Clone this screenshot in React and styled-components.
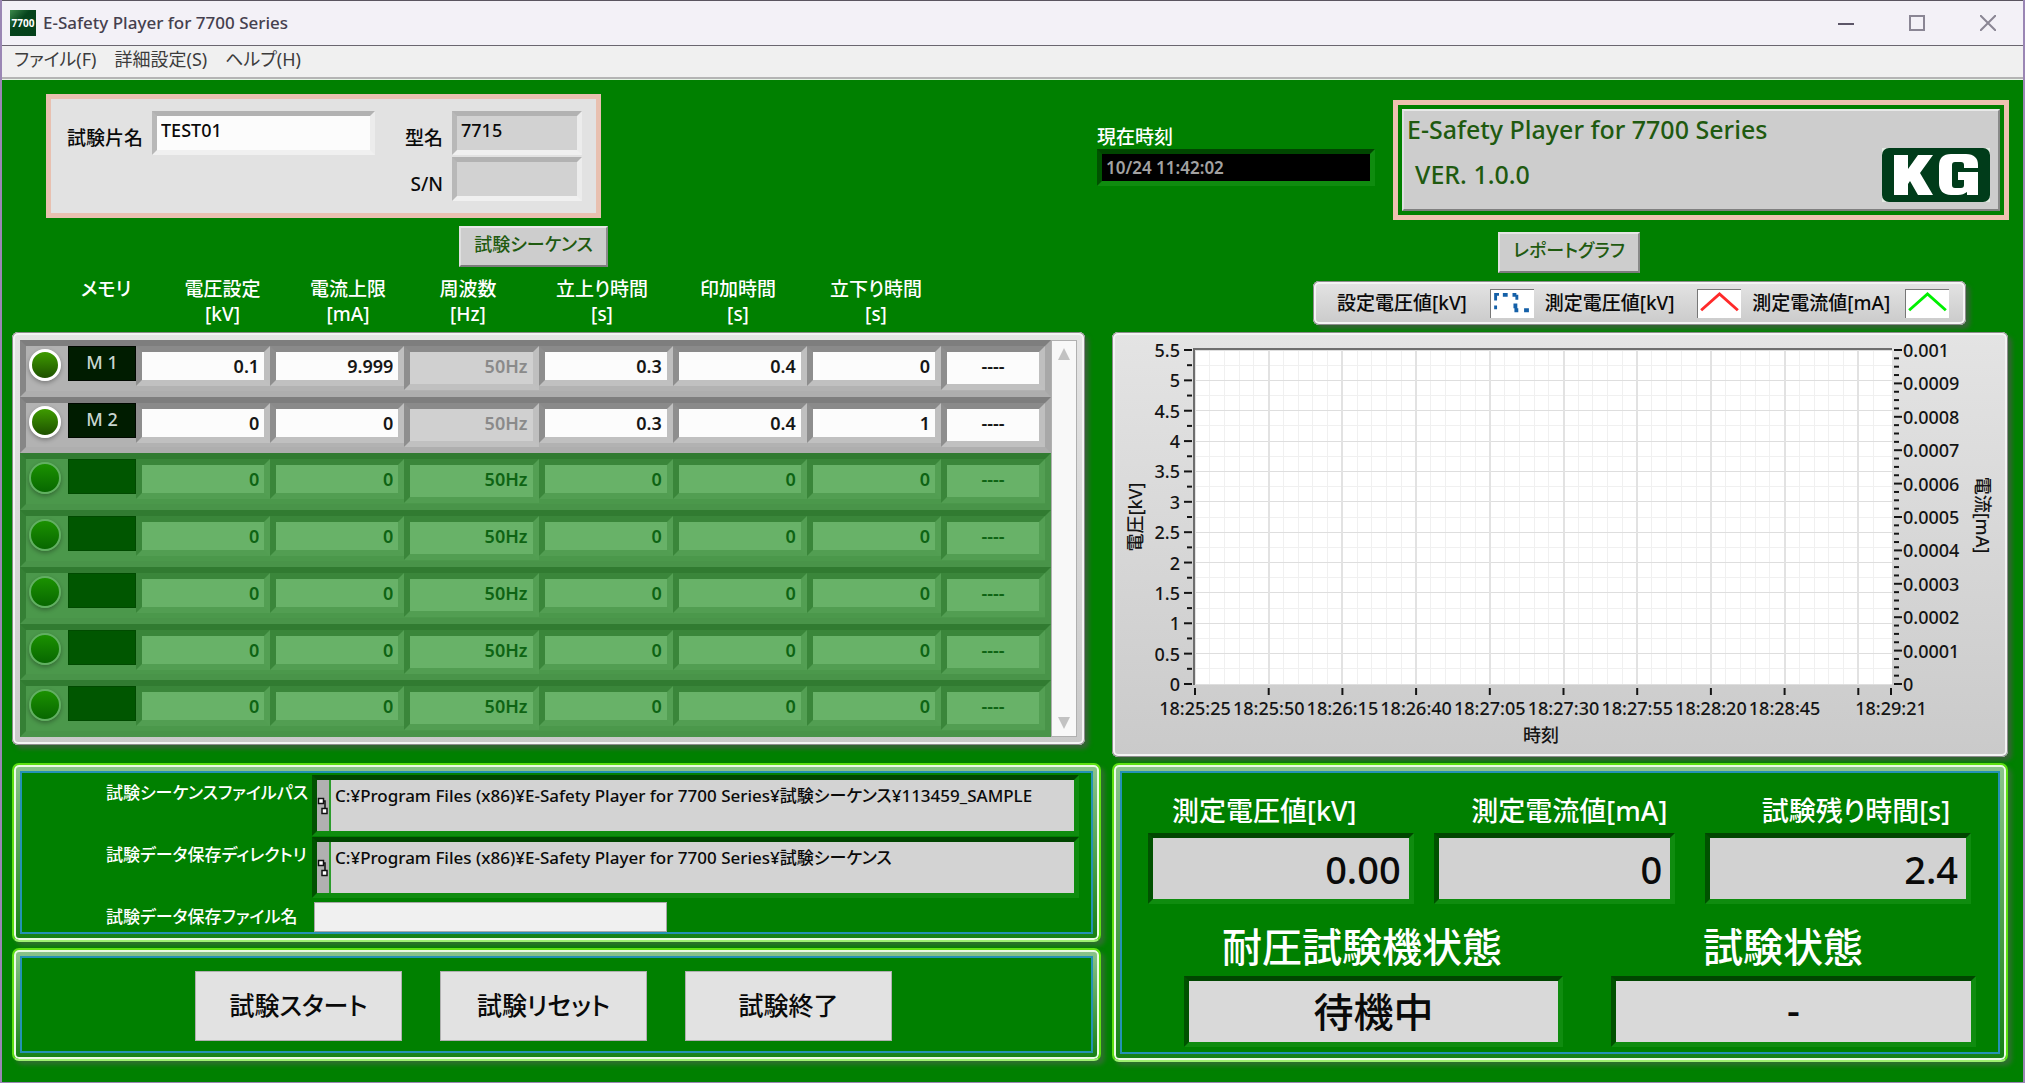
import React from "react";
import styled, { createGlobalStyle, css } from "styled-components";

const GlobalStyle = createGlobalStyle`
  *, *::before, *::after { box-sizing: border-box; }
  body {
    margin: 0;
    background: #008000;
    color: #0a0a0a;
    font-family: "Noto Sans", "Noto Sans CJK JP", sans-serif;
    font-feature-settings: "palt";
    font-size: 18px;
    font-weight: 500;
    line-height: 24px;
  }
  input, button, table { font: inherit; color: inherit; font-feature-settings: inherit; }
`;

/* ---------- window chrome ---------- */

const Window = styled.div`
  min-height: 100vh;
  display: flex;
  flex-direction: column;
  border: solid #9a86b4;
  border-width: 0 2px 1px 2px;
  background: #008000;
`;

const TitleBar = styled.header`
  display: flex;
  align-items: center;
  height: 46px;
  padding-left: 8px;
  background: #f3f1f7;
  border-top: 1px solid #5a5560;
  border-bottom: 1px solid #6a6670;
`;

const WindowTitle = styled.h1`
  flex: 1;
  margin: 0 0 0 7px;
  color: #45404e;
  font-size: 17px;
  font-weight: 500;
  line-height: 24px;
`;

const WindowButton = styled.button`
  display: grid;
  place-items: center;
  width: 71px;
  height: 44px;
  padding: 0;
  border: 0;
  background: transparent;
`;

const MenuBar = styled.nav`
  display: flex;
  gap: 18px;
  height: 34px;
  padding: 0 12px;
  background: #f0f0f0;
  border-bottom: 1px solid #e8f4e8;
  box-shadow: inset 0 -2px 0 #b4b4b4;
`;

const MenuItem = styled.button`
  padding: 0;
  border: 0;
  background: transparent;
  color: #3c3c3c;
  font-size: 18px;
  font-weight: 400;
  line-height: 24px;
  height: 26px;
`;

/* ---------- shared parts ---------- */

const bezels = {
  light: "#b2b2b2 #ececec #f0f0f0 #b8b8b8",
  green: "#004600 #0f8c0f #0f8c0f #005200",
};

const InsetInput = styled.input`
  display: block;
  width: 100%;
  min-width: 0;
  height: ${(p) => p.$height || 44}px;
  padding: 0 4px 6px;
  border: 5px solid;
  border-color: ${(p) => bezels[p.$tone || "light"]};
  border-radius: 0;
  background: ${(p) => p.$fill || "#d2d2d2"};
  outline: none;
`;

const PlateButton = styled.button`
  align-self: flex-start;
  height: 41px;
  padding: 0 0 6px;
  border: 2px solid;
  border-color: #e6e6e6 #8a8a8a #7c7c7c #e0e0e0;
  background: #cdcdcd;
  color: #1f5a10;
  font-size: 18px;
  line-height: 28px;
`;

const greyPlate = css`
  border-radius: 6px;
  background: linear-gradient(#e4e4e4, #cacaca);
  box-shadow:
    inset 0 0 0 1px #8c8c8c,
    inset 0 0 0 3px #f4f4f4,
    4px 4px 4px rgba(70, 90, 70, 0.75);
`;

const GlowFrame = styled.section`
  padding: 6px;
  border: 2px solid #5ee012;
  border-bottom-color: #9cf070;
  border-radius: 7px;
  background: linear-gradient(#8cc48c, #148014);
  box-shadow:
    inset 0 0 0 2px #eafbe4,
    4px 4px 4px rgba(50, 110, 50, 0.9);
`;

const FrameBody = styled.div`
  height: 100%;
  border: 2px solid #2492b4;
  background: #008000;
`;

/* ---------- header row ---------- */

const Header = styled.div`
  display: flex;
  align-items: flex-start;
  gap: 18px;
  padding: 14px 14px 0 44px;
`;

const SpecimenPanel = styled.section`
  display: grid;
  grid-template-columns: 101px 223px 77px 130px;
  gap: 2px 0;
  padding: 12px 14px 12px 0;
  border: 5px solid #e8c0b0;
  background: #e2e2e2;
`;

const SpecimenLabel = styled.label`
  grid-column: ${(p) => p.$column};
  padding: 15px 9px 0 0;
  text-align: right;
  white-space: nowrap;
  font-size: 19px;
  line-height: 24px;
`;

const Clock = styled.div`
  display: flex;
  flex-direction: column;
  width: 278px;
  margin: 31px 0 0 auto;
  color: #fff;
  font-size: 19px;
`;

const ClockInput = styled(InsetInput)`
  padding: 0 4px;
  color: #a2a2a2;
  font-size: 17px;
  font-weight: 600;
`;

const ProductFrame = styled.section`
  width: 616px;
  margin-top: 6px;
  padding: 4px;
  border: 5px solid #ecc2b0;
`;

const ProductPlate = styled.div`
  display: flex;
  justify-content: space-between;
  align-items: flex-end;
  height: 102px;
  padding: 0 8px 7px 3px;
  border: 2px solid;
  border-color: #e8e8e8 #8a8a8a #808080 #e0e0e0;
  background: #cdcdcd;
  color: #1f5a10;
  font-size: 25px;
`;

const ProductText = styled.div`
  display: grid;
  align-self: flex-start;
  gap: 9px;
  line-height: 36px;
`;

const ProductLine = styled.p`
  margin: 0;
  padding-left: ${(p) => (p.$indent ? 8 : 0)}px;
`;

/* ---------- main columns ---------- */

const Main = styled.main`
  flex: 1;
  display: grid;
  grid-template-columns: minmax(0, 1089fr) minmax(0, 896fr);
  gap: 11px;
  padding: 6px 15px 20px 10px;
`;

const LeftColumn = styled.div`
  display: flex;
  flex-direction: column;
  gap: 6px;
`;

const RightColumn = styled.div`
  display: flex;
  flex-direction: column;
  padding-top: 6px;
`;

const SequenceButton = styled(PlateButton)`
  width: 149px;
  margin-left: 447px;
`;

/* ---------- sequence table ---------- */

const SequenceTable = styled.table`
  display: block;
  margin: 4px 16px 12px 0;
`;

const HeadGroup = styled.thead`
  display: block;
  padding-bottom: 5px;
`;

const HeadRow = styled.tr`
  display: grid;
  grid-template-columns: 116fr 117fr 134fr 106fr 162fr 110fr 166fr 126fr;
  padding-left: 36px;
`;

const HeadCell = styled.th`
  padding: 0;
  color: #fff;
  font-size: 19px;
  font-weight: 500;
  line-height: 25px;
  white-space: pre-line;
`;

const RowGroup = styled.tbody`
  display: grid;
  grid-template-columns: minmax(0, 1fr) 26px;
  grid-template-rows: repeat(7, 1fr);
  min-height: 413px;
  padding: 8px;
  ${greyPlate}
`;

const palettes = {
  on: {
    row: "#b2b2b2",
    rowEdge: "#7e7e7e #a8a8a8 #aeaeae #868686",
    bezel: "#8a8a8a #bfbfbf #c0c0c0 #8e8e8e",
    field: "#fcfcfc",
    text: "#161616",
    memory: "#001c00",
    memoryEdge: "#000800",
    led: "linear-gradient(#42a400, #1a4800)",
    ledEdge: "#ffffff",
  },
  off: {
    row: "#4b984b",
    rowEdge: "#317b31 #499449 #499449 #358035",
    bezel: "#3a863a #539f53 #529e52 #3a863a",
    field: "#68b268",
    text: "#0e6414",
    memory: "#005600",
    memoryEdge: "#004a00",
    led: "linear-gradient(#1c9400, #066400)",
    ledEdge: "#62b062",
  },
};

const Row = styled.tr`
  grid-column: 1;
  display: flex;
  align-items: flex-start;
  border: 6px solid;
  border-color: ${(p) => p.$palette.rowEdge};
  background: ${(p) => p.$palette.row};
`;

const LedCell = styled.td`
  width: 42px;
  padding: 3px 0 0 3px;
`;

const Led = styled.span`
  display: block;
  width: 32px;
  height: 32px;
  border: ${(p) => (p.$palette === palettes.on ? 3 : 2)}px solid ${(p) => p.$palette.ledEdge};
  border-radius: 50%;
  background: ${(p) => p.$palette.led} border-box;
  box-shadow: 0 2px 4px rgba(0, 0, 0, 0.3);
`;

const MemoryCell = styled.td`
  width: 68px;
  height: 35px;
  padding: 0;
  border: 1px solid ${(p) => p.$palette.memoryEdge};
  background: ${(p) => p.$palette.memory};
  color: #c8d6d0;
  text-align: center;
  line-height: 30px;
`;

const ValueCell = styled.td`
  flex: ${(p) => (p.$narrow ? "0 0 104px" : "1 1 0")};
  min-width: 0;
  padding: 0;
`;

const ValueInput = styled.input`
  display: block;
  width: 100%;
  height: ${(p) => (p.$tall ? 44 : 40)}px;
  padding: ${(p) => (p.$tall ? "0 5px 4px" : "0 5px")};
  border: 6px solid;
  border-color: ${(p) => p.$palette.bezel};
  background: ${(p) => (p.$dim ? "#d0d0d0" : p.$palette.field)};
  color: ${(p) => (p.$dim ? "#8a8a8a" : p.$palette.text)};
  text-align: ${(p) => p.$align || "right"};
  font-weight: 600;
  font-size: 18px;
  outline: none;
`;

const ScrollRow = styled.tr`
  grid-column: 2;
  grid-row: 1 / 8;
  display: flex;
`;

const ScrollTrack = styled.td`
  flex: 1;
  display: flex;
  flex-direction: column;
  justify-content: space-between;
  align-items: center;
  padding: 7px 0;
  border: 1px solid #b0b0b0;
  background: #f8f8f8;
`;

const ScrollButton = styled.button`
  display: grid;
  padding: 0;
  border: 0;
  background: transparent;
`;

/* ---------- paths ---------- */

const PathGrid = styled.div`
  display: grid;
  grid-template-columns: 290px minmax(0, 1fr);
  row-gap: 1px;
  padding: 2px 12px 0 0;
`;

const PathLabel = styled.label`
  padding: 6px 0 0 84px;
  color: #fff;
  font-size: 17px;
  white-space: nowrap;
`;

const PathField = styled.div`
  display: flex;
  height: 61px;
  border: 5px solid;
  border-color: ${bezels.green};
  background: #d3d3d3;
`;

const PathIcon = styled.span`
  display: grid;
  place-items: center;
  width: 14px;
  border-right: 2px solid #2c9c2c;
  background: #b0b0b0;
`;

const PathInput = styled.input`
  flex: 1;
  min-width: 0;
  height: 28px;
  padding: 0 4px;
  border: 0;
  background: transparent;
  font-size: 17px;
  outline: none;
`;

const FileInput = styled.input`
  width: 353px;
  height: 30px;
  margin: 3px 0 0 2px;
  padding: 0 4px;
  border: 1px solid #a8a8a8;
  background: #f0f0f0;
  outline: none;
`;

/* ---------- actions ---------- */

const ActionBar = styled(FrameBody)`
  display: flex;
  gap: 38px;
  padding: 13px 12px 10px 173px;
`;

const ActionButton = styled.button`
  width: 207px;
  height: 70px;
  padding: 0 0 2px;
  border: 1px solid #b0b0b0;
  background: #e2e2e2;
  font-size: 25px;
`;

/* ---------- graph ---------- */

const ReportButton = styled(PlateButton)`
  width: 142px;
  margin-left: 386px;
`;

const Legend = styled.ul`
  display: flex;
  align-self: flex-end;
  align-items: center;
  gap: 11px;
  width: 653px;
  height: 44px;
  margin: 8px 42px 7px 0;
  padding: 0 17px 0 24px;
  list-style: none;
  font-size: 19px;
  ${greyPlate}
`;

const LegendItem = styled.li`
  display: flex;
  flex: 1 1 0;
  align-items: center;
  justify-content: space-between;
  white-space: nowrap;
`;

const Swatch = styled.svg`
  flex: none;
  width: 44px;
  height: 29px;
  border: solid #777;
  border-width: 1px 0 0 1px;
  background: #fff;
`;

const GraphPanel = styled.section`
  margin-bottom: 6px;
  ${greyPlate}
`;

const GraphSvg = styled.svg`
  display: block;
  width: 100%;
  height: auto;
  font-size: 18px;
  font-weight: 500;
  fill: #141414;
`;

/* ---------- readings ---------- */

const StatusFrame = styled(GlowFrame)`
  flex: 1;
`;

const StatusBody = styled(FrameBody)`
  display: flex;
  flex-direction: column;
  justify-content: space-between;
  padding: 20px 27px 5px 26px;
`;

const ReadingLabels = styled.div`
  display: grid;
  grid-template-columns: 299fr 290fr 209fr;
  padding: 0 0 4px 24px;
`;

const ReadingBoxes = styled.div`
  display: grid;
  grid-template-columns: 266fr 20fr 242fr 30fr 266fr;
`;

const StateLabels = styled.div`
  display: grid;
  grid-template-columns: 481fr 268fr;
  padding: 0 0 2px 74px;
`;

const StateBoxes = styled.div`
  display: grid;
  grid-template-columns: 379fr 365fr;
  column-gap: 48px;
  padding-left: 36px;
  margin-right: -5px;
`;

const ReadingLabel = styled.label`
  color: #fff;
  font-size: ${(p) => (p.$large ? 40 : 27)}px;
  line-height: ${(p) => (p.$large ? 54 : 36)}px;
  white-space: nowrap;
`;

const ReadingInput = styled(InsetInput)`
  grid-column: ${(p) => p.$column};
  padding: 0 8px;
  font-size: 38px;
  text-align: right;
`;

const StateInput = styled(InsetInput)`
  padding: 0 8px 4px;
  font-size: 40px;
  text-align: center;
`;

/* ---------- data ---------- */

const columns = [
  "メモリ",
  "電圧設定\n[kV]",
  "電流上限\n[mA]",
  "周波数\n[Hz]",
  "立上り時間\n[s]",
  "印加時間\n[s]",
  "立下り時間\n[s]",
];

const emptyRow = { name: "", values: ["0", "0", "50Hz", "0", "0", "0", "----"] };
const rows = [
  { name: "M 1", values: ["0.1", "9.999", "50Hz", "0.3", "0.4", "0", "----"] },
  { name: "M 2", values: ["0", "0", "50Hz", "0.3", "0.4", "1", "----"] },
  emptyRow,
  emptyRow,
  emptyRow,
  emptyRow,
  emptyRow,
];

const timeLabels = [
  "18:25:25", "18:25:50", "18:26:15", "18:26:40", "18:27:05",
  "18:27:30", "18:27:55", "18:28:20", "18:28:45",
];

/* ---------- drawings ---------- */

function AppIcon() {
  return (
    <svg width="26" height="26" viewBox="0 0 26 26" aria-hidden="true">
      <defs>
        <linearGradient id="appIcon" x1="0" y1="0" x2="1" y2="1">
          <stop offset="0" stopColor="#3c8a4c" />
          <stop offset="0.4" stopColor="#06441c" />
          <stop offset="1" stopColor="#04401a" />
        </linearGradient>
      </defs>
      <rect width="26" height="26" fill="url(#appIcon)" />
      <text x="13" y="17" fill="#fff" fontSize="10" fontWeight="700" textAnchor="middle">7700</text>
    </svg>
  );
}

function Logo() {
  return (
    <svg width="108" height="54" viewBox="0 0 108 54" role="img" aria-label="KG">
      <rect width="108" height="54" fill="#e4ece4" />
      <rect width="108" height="54" rx="7" fill="#003c1a" />
      <path fill="#fff" d="M12 7h14v14L36 7h15L38 25l13 22H36l-8-14-2 3v11H12z" />
      <path
        fill="#fff"
        d="M96 20H82v-3c0-2-1-3-3-3h-6c-2 0-3 1-3 3v20c0 2 1 3 3 3h6c2 0 3-1 3-3v-5h-6v-8h20v23H85v-3c-3 2-5 3-9 3h-7c-8 0-12-5-12-12V18C57 10 61 6 69 6h15c8 0 12 4 12 11z"
      />
    </svg>
  );
}

function PathGlyph() {
  return (
    <svg width="12" height="18" viewBox="0 0 12 18" aria-hidden="true">
      <path d="M6 4h2v8" fill="none" stroke="#111" strokeWidth="1.5" />
      <rect x="1.5" y="1.5" width="5" height="5" fill="#fff" stroke="#111" strokeWidth="1.5" />
      <rect x="5" y="11.5" width="5" height="5" fill="#fff" stroke="#111" strokeWidth="1.5" />
    </svg>
  );
}

const plot = { left: 83, right: 779, top: 18, bottom: 352 };

function Graph() {
  const height = plot.bottom - plot.top;
  const step = 73.7;
  const minorX = Array.from({ length: 47 }, (_, i) => plot.left + (i * step) / 5);
  const majorX = Array.from({ length: 10 }, (_, i) => plot.left + i * step);
  const leftTicks = Array.from({ length: 23 }, (_, i) => i);
  const rightTicks = Array.from({ length: 41 }, (_, i) => i);
  return (
    <GraphSvg viewBox="0 0 896 425" role="img" aria-label="レポートグラフ">
      <rect x="82" y="17" width="698" height="336" fill="#fff" />
      <g shapeRendering="crispEdges" strokeWidth="1">
        {minorX.map((x) => (
          <path key={x} d={`M${x} 18V353`} stroke="#f0f0f0" />
        ))}
        {leftTicks.map((i) => {
          const y = plot.bottom - (i * height) / 22;
          return <path key={i} d={`M83 ${y}H780`} stroke={i % 2 ? "#f0f0f0" : "#dedede"} />;
        })}
        {majorX.map((x) => (
          <path key={x} d={`M${x} 18V353`} stroke="#e2e2e2" strokeWidth="2" />
        ))}
      </g>
      <path d="M82 353V17H780" fill="none" stroke="#6e6e6e" strokeWidth="2" />
      {leftTicks.map((i) => {
        const y = plot.bottom - (i * height) / 22;
        return (
          <g key={i}>
            <path d={`M${i % 2 ? 75 : 72} ${y}H80`} stroke="#141414" strokeWidth="2" />
            {i % 2 === 0 && (
              <text x="68" y={y + 7} textAnchor="end">{String(i / 4)}</text>
            )}
          </g>
        );
      })}
      {rightTicks.map((i) => {
        const y = plot.bottom - (i * height) / 40;
        return (
          <g key={i}>
            <path d={`M782 ${y}H${i % 4 ? 787 : 790}`} stroke="#141414" strokeWidth="2" />
            {i % 4 === 0 && (
              <text x="791" y={y + 7}>{String(Number((i / 40000).toFixed(4)))}</text>
            )}
          </g>
        );
      })}
      {[...majorX, plot.right].map((x) => (
        <path key={x} d={`M${x} 356v7`} stroke="#141414" strokeWidth="2" />
      ))}
      {timeLabels.map((label, i) => (
        <text key={label} x={plot.left + i * step} y="383" textAnchor="middle">{label}</text>
      ))}
      <text x={plot.right} y="383" textAnchor="middle">18:29:21</text>
      <text x="429" y="410" textAnchor="middle">時刻</text>
      <text transform="translate(30 185) rotate(-90)" textAnchor="middle">電圧[kV]</text>
      <text transform="translate(864 183) rotate(90)" textAnchor="middle">電流[mA]</text>
    </GraphSvg>
  );
}

/* ---------- screens ---------- */

function SequenceRow({ index, row }) {
  const active = row.name !== "";
  const palette = active ? palettes.on : palettes.off;
  return (
    <Row $palette={palette}>
      <LedCell><Led $palette={palette} /></LedCell>
      <MemoryCell $palette={palette}>{row.name}</MemoryCell>
      {row.values.map((value, i) => {
        const frequency = i === 2;
        const last = i === 6;
        return (
          <ValueCell key={i} $narrow={last}>
            <ValueInput
              $palette={palette}
              $tall={frequency || last}
              $dim={frequency && active}
              $align={last ? "center" : "right"}
              readOnly={!active || frequency}
              defaultValue={value}
              aria-label={`${index + 1} ${(columns[i + 1] || "").replace("\n", " ")}`}
            />
          </ValueCell>
        );
      })}
    </Row>
  );
}

export default function App() {
  return (
    <>
      <GlobalStyle />
      <Window>
        <TitleBar>
          <AppIcon />
          <WindowTitle>E-Safety Player for 7700 Series</WindowTitle>
          <WindowButton aria-label="最小化">
            <svg width="16" height="16" stroke="#5c5668" strokeWidth="2"><path d="M0 9h16" /></svg>
          </WindowButton>
          <WindowButton aria-label="最大化">
            <svg width="16" height="16" fill="none" stroke="#8a8694" strokeWidth="2"><path d="M1 1h14v14H1z" /></svg>
          </WindowButton>
          <WindowButton aria-label="閉じる">
            <svg width="16" height="16" stroke="#8a8694" strokeWidth="2"><path d="M0 0l16 16M16 0L0 16" /></svg>
          </WindowButton>
        </TitleBar>
        <MenuBar>
          <MenuItem>ファイル(F)</MenuItem>
          <MenuItem>詳細設定(S)</MenuItem>
          <MenuItem>ヘルプ(H)</MenuItem>
        </MenuBar>

        <Header>
          <SpecimenPanel>
            <SpecimenLabel $column={1} htmlFor="specimen">試験片名</SpecimenLabel>
            <InsetInput id="specimen" $fill="#fcfcfc" defaultValue="TEST01" />
            <SpecimenLabel $column={3} htmlFor="model">型名</SpecimenLabel>
            <InsetInput id="model" readOnly defaultValue="7715" />
            <SpecimenLabel $column={3} htmlFor="serial">S/N</SpecimenLabel>
            <InsetInput id="serial" readOnly />
          </SpecimenPanel>
          <Clock>
            <label htmlFor="clock">現在時刻</label>
            <ClockInput id="clock" $tone="green" $fill="#000" $height={37} readOnly defaultValue="10/24 11:42:02" />
          </Clock>
          <ProductFrame>
            <ProductPlate>
              <ProductText>
                <ProductLine>E-Safety Player for 7700 Series</ProductLine>
                <ProductLine $indent>VER. 1.0.0</ProductLine>
              </ProductText>
              <Logo />
            </ProductPlate>
          </ProductFrame>
        </Header>

        <Main>
          <LeftColumn>
            <SequenceButton>試験シーケンス</SequenceButton>
            <SequenceTable>
              <HeadGroup>
                <HeadRow>
                  {columns.map((name) => <HeadCell key={name} scope="col">{name}</HeadCell>)}
                </HeadRow>
              </HeadGroup>
              <RowGroup>
                <ScrollRow>
                  <ScrollTrack>
                    <ScrollButton aria-label="上へ">
                      <svg width="12" height="12" fill="#c2c2c2"><path d="M6 0l6 12H0z" /></svg>
                    </ScrollButton>
                    <ScrollButton aria-label="下へ">
                      <svg width="12" height="12" fill="#c2c2c2"><path d="M0 0h12L6 12z" /></svg>
                    </ScrollButton>
                  </ScrollTrack>
                </ScrollRow>
                {rows.map((row, i) => <SequenceRow key={i} index={i} row={row} />)}
              </RowGroup>
            </SequenceTable>

            <GlowFrame>
              <FrameBody>
                <PathGrid>
                  <PathLabel htmlFor="sequencePath">試験シーケンスファイルパス</PathLabel>
                  <PathField>
                    <PathIcon><PathGlyph /></PathIcon>
                    <PathInput id="sequencePath" readOnly defaultValue="C:¥Program Files (x86)¥E-Safety Player for 7700 Series¥試験シーケンス¥113459_SAMPLE" />
                  </PathField>
                  <PathLabel htmlFor="dataPath">試験データ保存ディレクトリ</PathLabel>
                  <PathField>
                    <PathIcon><PathGlyph /></PathIcon>
                    <PathInput id="dataPath" readOnly defaultValue="C:¥Program Files (x86)¥E-Safety Player for 7700 Series¥試験シーケンス" />
                  </PathField>
                  <PathLabel htmlFor="dataFile">試験データ保存ファイル名</PathLabel>
                  <FileInput id="dataFile" />
                </PathGrid>
              </FrameBody>
            </GlowFrame>

            <GlowFrame>
              <ActionBar>
                <ActionButton>試験スタート</ActionButton>
                <ActionButton>試験リセット</ActionButton>
                <ActionButton>試験終了</ActionButton>
              </ActionBar>
            </GlowFrame>
          </LeftColumn>

          <RightColumn>
            <ReportButton>レポートグラフ</ReportButton>
            <Legend>
              <LegendItem>
                設定電圧値[kV]
                <Swatch viewBox="0 0 44 29">
                  <path d="M3 3h5v3H6v5H3zM12 3h5v4h-5zM22 3h4v2h2v5h-3V7h-3zM3 16h3v4H3zM23 14h4v5h1v4h-4v-4h-1zM34 19h5v4h-5z" fill="#1460a8" />
                </Swatch>
              </LegendItem>
              <LegendItem>
                測定電圧値[kV]
                <Swatch viewBox="0 0 44 29">
                  <path d="M3 21L22 4l19 17" fill="none" stroke="#ff2a2a" strokeWidth="3" />
                </Swatch>
              </LegendItem>
              <LegendItem>
                測定電流値[mA]
                <Swatch viewBox="0 0 44 29">
                  <path d="M3 21L22 4l19 17" fill="none" stroke="#00f000" strokeWidth="3" />
                </Swatch>
              </LegendItem>
            </Legend>
            <GraphPanel><Graph /></GraphPanel>
            <StatusFrame>
              <StatusBody>
                <div>
                  <ReadingLabels>
                    <ReadingLabel htmlFor="voltage">測定電圧値[kV]</ReadingLabel>
                    <ReadingLabel htmlFor="current">測定電流値[mA]</ReadingLabel>
                    <ReadingLabel htmlFor="remaining">試験残り時間[s]</ReadingLabel>
                  </ReadingLabels>
                  <ReadingBoxes>
                    <ReadingInput id="voltage" $column={1} $tone="green" $height={71} readOnly defaultValue="0.00" />
                    <ReadingInput id="current" $column={3} $tone="green" $height={71} readOnly defaultValue="0" />
                    <ReadingInput id="remaining" $column={5} $tone="green" $height={71} readOnly defaultValue="2.4" />
                  </ReadingBoxes>
                </div>
                <div>
                  <StateLabels>
                    <ReadingLabel $large htmlFor="tester">耐圧試験機状態</ReadingLabel>
                    <ReadingLabel $large htmlFor="test">試験状態</ReadingLabel>
                  </StateLabels>
                  <StateBoxes>
                    <StateInput id="tester" $tone="green" $fill="#d9d9d9" $height={71} readOnly defaultValue="待機中" />
                    <StateInput id="test" $tone="green" $fill="#d9d9d9" $height={71} readOnly defaultValue="-" />
                  </StateBoxes>
                </div>
              </StatusBody>
            </StatusFrame>
          </RightColumn>
        </Main>
      </Window>
    </>
  );
}
